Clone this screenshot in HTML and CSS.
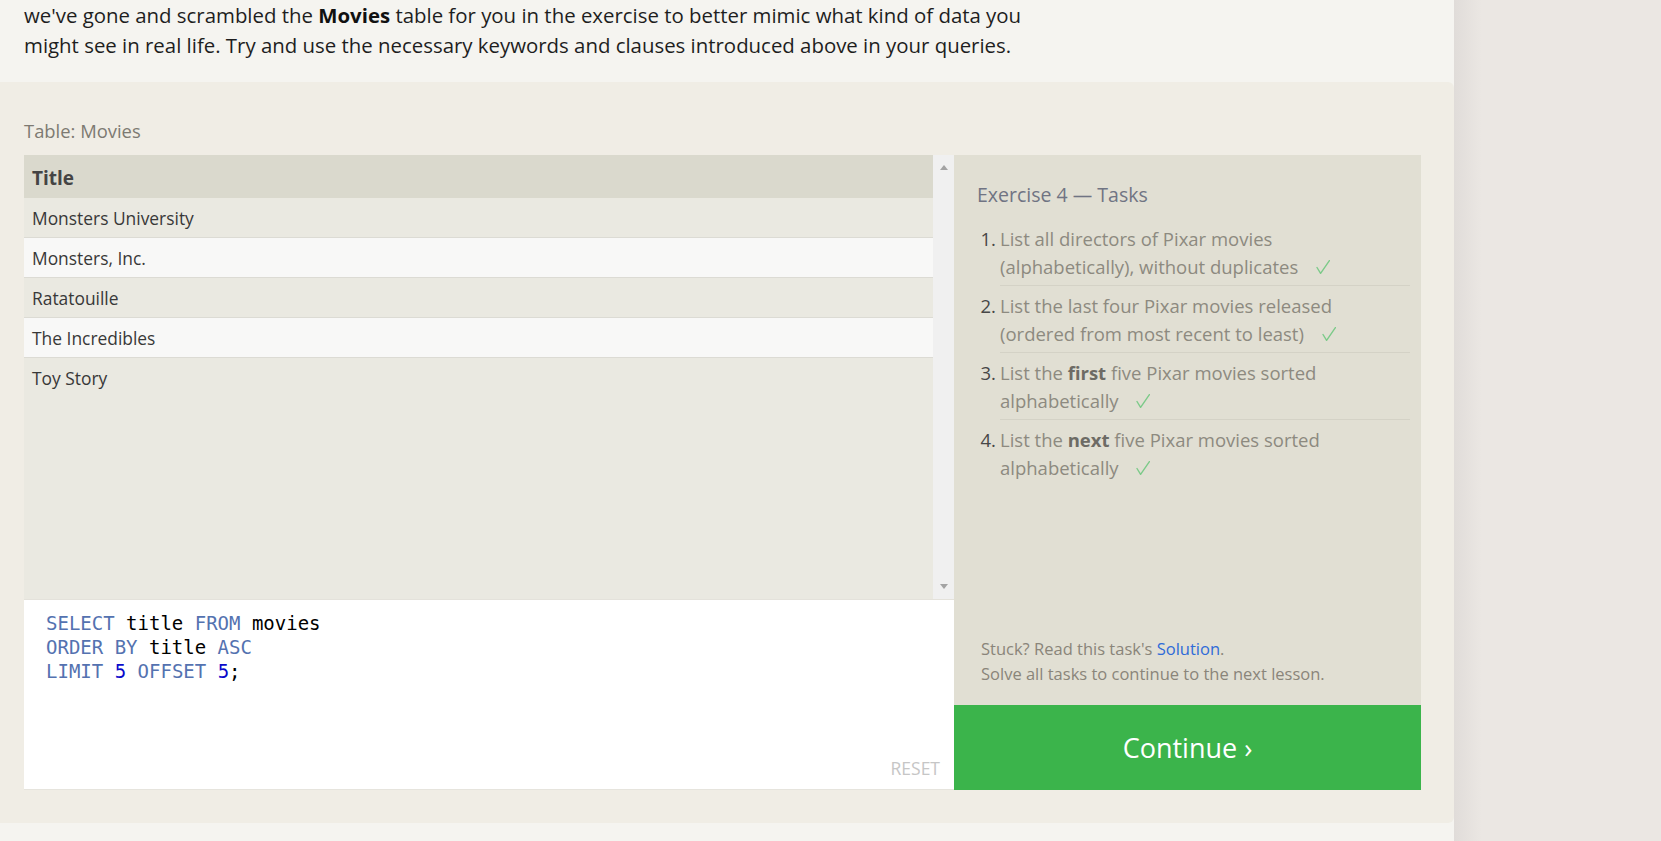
FILE: index.html
```html
<!DOCTYPE html>
<html lang="en">
<head>
<meta charset="utf-8">
<title>SQL Lesson — Exercise 4</title>
<link rel="stylesheet" href="styles.css">
</head>
<body>
<div class="page">
  <p class="intro">we've gone and scrambled the <strong>Movies</strong> table for you in the exercise to better mimic what kind of data you might see in real life. Try and use the necessary keywords and clauses introduced above in your queries.</p>

  <section class="exercise">
    <div class="label">Table: Movies</div>
    <div class="widget">
      <div class="left">
        <div class="table-wrap">
          <div class="table">
            <div class="row head">Title</div>
            <div class="row odd">Monsters University</div>
            <div class="row even">Monsters, Inc.</div>
            <div class="row odd">Ratatouille</div>
            <div class="row even">The Incredibles</div>
            <div class="row odd last">Toy Story</div>
          </div>
          <div class="scrollbar">
            <span class="arrow up"></span>
            <span class="arrow down"></span>
          </div>
        </div>
        <div class="editor">
<pre class="code"><span class="kw">SELECT</span> title <span class="kw">FROM</span> movies
<span class="kw">ORDER BY</span> title <span class="kw">ASC</span>
<span class="kw">LIMIT</span> <span class="num-lit">5</span> <span class="kw">OFFSET</span> <span class="num-lit">5</span>;</pre>
          <div class="reset">RESET</div>
        </div>
      </div>

      <div class="right">
        <div class="panel">
          <h3 class="heading">Exercise 4 — Tasks</h3>
          <ol class="tasks">
            <li><span class="num">1.</span><span class="task"><span class="txt">List all directors of Pixar movies (alphabetically), without duplicates <svg class="check" width="14" height="14" viewBox="0 0 14 14"><path d="M1 7.5 L4.6 13.3 L13.4 0.6"/></svg></span></span></li>
            <li><span class="num">2.</span><span class="task"><span class="txt">List the last four Pixar movies released (ordered from most recent to least) <svg class="check" width="14" height="14" viewBox="0 0 14 14"><path d="M1 7.5 L4.6 13.3 L13.4 0.6"/></svg></span></span></li>
            <li><span class="num">3.</span><span class="task"><span class="txt">List the <b>first</b> five Pixar movies sorted alphabetically <svg class="check" width="14" height="14" viewBox="0 0 14 14"><path d="M1 7.5 L4.6 13.3 L13.4 0.6"/></svg></span></span></li>
            <li><span class="num">4.</span><span class="task"><span class="txt">List the <b>next</b> five Pixar movies sorted alphabetically <svg class="check" width="14" height="14" viewBox="0 0 14 14"><path d="M1 7.5 L4.6 13.3 L13.4 0.6"/></svg></span></span></li>
          </ol>
          <div class="stuck">
            <div>Stuck? Read this task's <a href="#" class="link">Solution</a>.</div>
            <div>Solve all tasks to continue to the next lesson.</div>
          </div>
        </div>
        <div class="continue">Continue ›</div>
      </div>
    </div>
  </section>
</div>
<div class="side"></div>
</body>
</html>
```

FILE: styles.css
```css
html, body {
  margin: 0;
  padding: 0;
  height: 100%;
  overflow: hidden;
}

body {
  display: flex;
  min-height: 100vh;
  background: #ebe7e3;
  font-family: "Open Sans", "Noto Sans", sans-serif;
}

.page {
  width: 1454px;
  flex: none;
  background: #f5f4f0;
}

.side {
  flex: 1;
  background: linear-gradient(to right, #e0dcd9 0px, #ebe7e3 28px);
}

.intro {
  margin: 0 0 22px 0;
  padding-left: 24px;
  width: 1035px;
  font-size: 20.4px;
  line-height: 30px;
  color: #1e1e1e;
}

.intro strong {
  font-weight: 700;
  color: #111;
}

.exercise {
  background: #f0ede5;
  border-radius: 0 6px 6px 0;
  padding: 36px 33px 33px 24px;
}

.label {
  font-size: 18.4px;
  line-height: 26px;
  color: #7d7a72;
  margin-bottom: 11px;
}

.widget {
  display: flex;
  height: 635px;
}

.left {
  width: 930px;
  display: flex;
  flex-direction: column;
}

.table-wrap {
  height: 444px;
  display: flex;
  background: #eae9e1;
}

.table {
  flex: 1;
}

.row {
  height: 40px;
  box-sizing: border-box;
  display: flex;
  align-items: center;
  padding-left: 8px;
  font-size: 17.4px;
  color: #383838;
  border-bottom: 1px solid #dcdbd4;
}

.row.head {
  height: 43px;
  padding-top: 2px;
  background: #dad9cd;
  font-size: 19px;
  font-weight: 700;
  color: #444;
  border-bottom: none;
}

.row.odd {
  background: #eae9e1;
}

.row.even {
  background: #f8f8f7;
}

.row.last {
  border-bottom: none;
}

.scrollbar {
  width: 21px;
  background: #f0f0f0;
  display: flex;
  flex-direction: column;
  justify-content: space-between;
  align-items: center;
  padding: 10px 0;
  box-sizing: border-box;
}

.arrow {
  width: 0;
  height: 0;
  border-left: 4.5px solid transparent;
  border-right: 4.5px solid transparent;
}

.arrow.up {
  border-bottom: 5px solid #a3a3a3;
}

.arrow.down {
  border-top: 5px solid #a3a3a3;
}

.editor {
  height: 191px;
  box-sizing: border-box;
  background: #fff;
  border-top: 1px solid #e4e2db;
  border-bottom: 1px solid #e6e4dd;
  display: flex;
  flex-direction: column;
}

.code {
  margin: 0;
  padding: 12px 22px 0;
  font-family: "DejaVu Sans Mono", "Liberation Mono", monospace;
  font-size: 19px;
  line-height: 23.8px;
  color: #000;
}

.kw {
  color: #5472b0;
}

.num-lit {
  color: #0a0acb;
}

.reset {
  margin-top: auto;
  align-self: flex-end;
  padding: 0 14px 11px 0;
  font-size: 17.5px;
  line-height: 20px;
  color: #c6c6c6;
}

.right {
  width: 467px;
  display: flex;
  flex-direction: column;
}

.panel {
  flex: 1;
  background: #e1dfd3;
  padding: 26px 11px 19px 23px;
  display: flex;
  flex-direction: column;
}

.heading {
  margin: 0 0 10px 0;
  font-size: 19.5px;
  line-height: 28px;
  font-weight: 400;
  color: #707483;
}

.tasks {
  margin: 0;
  padding: 0;
  list-style: none;
}

.tasks li {
  display: flex;
  font-size: 18.5px;
  line-height: 28px;
}

.num {
  width: 23px;
  box-sizing: border-box;
  padding: 6px 4px 0 0;
  text-align: right;
  color: #474747;
}

.task {
  flex: 1;
  padding: 6px 45px 4px 0;
  border-bottom: 1px solid #d4d2c6;
  color: #8d8a80;
}

.tasks li:last-child .task {
  border-bottom: none;
}

.task b {
  font-weight: 700;
  color: #6d6b65;
}

.check {
  margin-left: 13px;
  vertical-align: baseline;
  fill: none;
  stroke: #7cca89;
  stroke-width: 1.4;
  stroke-linecap: round;
  stroke-linejoin: round;
}

.stuck {
  margin-top: auto;
  padding-left: 4px;
  font-size: 16.5px;
  line-height: 25px;
  color: #8a857a;
}

.link {
  color: #2f6bd8;
  text-decoration: none;
}

.continue {
  height: 85px;
  background: #3bb44b;
  color: #fff;
  font-size: 27px;
  display: flex;
  align-items: center;
  justify-content: center;
}
```
